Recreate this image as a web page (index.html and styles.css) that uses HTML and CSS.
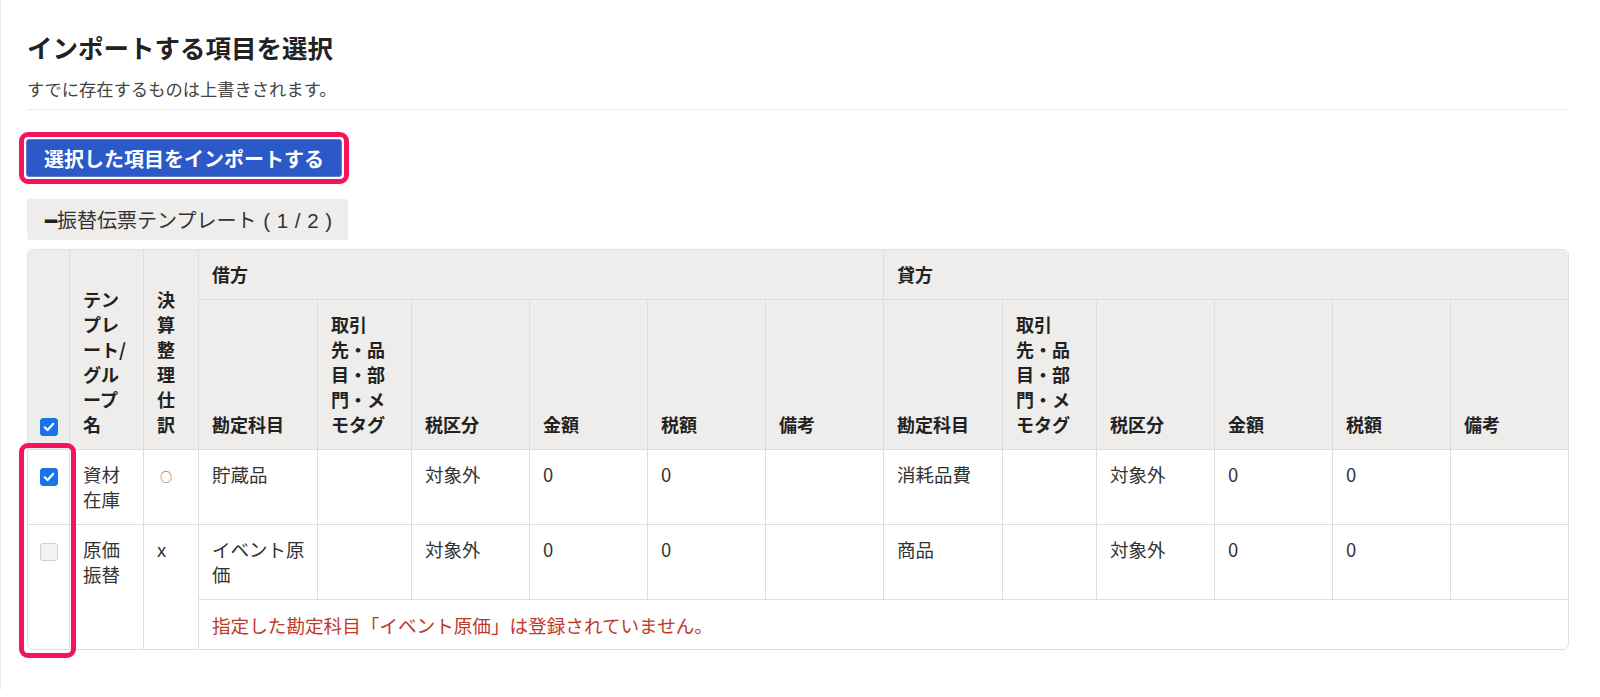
FILE: index.html
```html
<!DOCTYPE html>
<html lang="ja">
<head>
    <meta charset="UTF-8">
    <meta name="viewport" content="width=device-width, initial-scale=1.0">
    <title>インポートする項目を選択</title>
    <link rel="stylesheet" href="styles.css">
</head>
<body>
    <div class="page">
        <h1>インポートする項目を選択</h1>
        <p class="lead">すでに存在するものは上書きされます。</p>

        <div class="mark-box">
            <button type="button" class="import-button">選択した項目をインポートする</button>
        </div>

        <div class="tab"><span class="minus">━</span>振替伝票テンプレート<span class="count"> ( 1 / 2 )</span></div>

        <div class="table-wrap">
            <table class="import-table">
                <colgroup>
                    <col style="width:42px">
                    <col style="width:74px">
                    <col style="width:55px">
                    <col style="width:119px">
                    <col style="width:94px">
                    <col style="width:118px">
                    <col style="width:118px">
                    <col style="width:118px">
                    <col style="width:118px">
                    <col style="width:119px">
                    <col style="width:94px">
                    <col style="width:118px">
                    <col style="width:118px">
                    <col style="width:118px">
                    <col style="width:117px">
                </colgroup>
                <thead>
                    <tr>
                        <th rowspan="2" class="check-col"><input type="checkbox" class="check" checked></th>
                        <th rowspan="2">テンプレート/グループ名</th>
                        <th rowspan="2">決算整理仕訳</th>
                        <th colspan="6" class="group">借方</th>
                        <th colspan="6" class="group last">貸方</th>
                    </tr>
                    <tr>
                        <th>勘定科目</th>
                        <th>取引先・品目・部門・メモタグ</th>
                        <th>税区分</th>
                        <th>金額</th>
                        <th>税額</th>
                        <th>備考</th>
                        <th>勘定科目</th>
                        <th>取引先・品目・部門・メモタグ</th>
                        <th>税区分</th>
                        <th>金額</th>
                        <th>税額</th>
                        <th class="last">備考</th>
                    </tr>
                </thead>
                <tbody>
                    <tr>
                        <td class="check-col"><input type="checkbox" class="check" checked></td>
                        <td>資材在庫</td>
                        <td><span class="maru">○</span></td>
                        <td>貯蔵品</td>
                        <td></td>
                        <td>対象外</td>
                        <td>0</td>
                        <td>0</td>
                        <td></td>
                        <td>消耗品費</td>
                        <td></td>
                        <td>対象外</td>
                        <td>0</td>
                        <td>0</td>
                        <td class="last"></td>
                    </tr>
                    <tr>
                        <td rowspan="2" class="check-col end"><input type="checkbox" class="check"></td>
                        <td rowspan="2" class="end">原価振替</td>
                        <td rowspan="2" class="end">x</td>
                        <td>イベント原価</td>
                        <td></td>
                        <td>対象外</td>
                        <td>0</td>
                        <td>0</td>
                        <td></td>
                        <td>商品</td>
                        <td></td>
                        <td>対象外</td>
                        <td>0</td>
                        <td>0</td>
                        <td class="last"></td>
                    </tr>
                    <tr>
                        <td colspan="12" class="error end last">指定した勘定科目「イベント原価」は登録されていません。</td>
                    </tr>
                </tbody>
            </table>
            <!-- 注記用の枠 -->
            <div class="mark-column"></div>
        </div>
    </div>
</body>
</html>
```

FILE: styles.css
```css
body {
    margin: 0;
    background-color: #fff;
    font-family: "Noto Sans CJK JP", "Liberation Sans", sans-serif;
    color: #333;
}
.page {
    border-left: 1px solid #ececec;
    padding: 29px 31px 40px 26px;
    min-height: 620px;
}
h1 {
    margin: 0;
    font-size: 25.5px;
    line-height: 36px;
    font-weight: bold;
    color: #222;
}
.lead {
    margin: 11px 0 0;
    padding-bottom: 8px;
    font-size: 17.3px;
    line-height: 25px;
    color: #444;
    border-bottom: 1px solid #ececec;
}
.mark-box {
    display: inline-block;
    margin: 22px 0 0 -8px;
    padding: 2px;
    border: 5px solid #f7135a;
    border-radius: 9px;
}
.import-button {
    display: block;
    width: 316px;
    height: 38px;
    padding: 0;
    background-color: #2b5ac8;
    border: 1px solid #5a80d8;
    border-radius: 3px;
    color: #fff;
    font-family: inherit;
    font-size: 20px;
    font-weight: bold;
    cursor: pointer;
}
.tab {
    width: 321px;
    height: 41px;
    margin-top: 15px;
    padding-left: 18px;
    box-sizing: border-box;
    background-color: #efedec;
    border-radius: 3px;
    font-size: 20px;
    line-height: 41px;
    color: #333;
    white-space: nowrap;
}
.minus {
    font-family: "DejaVu Sans", sans-serif;
    font-weight: bold;
    color: #222;
}
.count {
    font-family: "Liberation Sans", sans-serif;
    font-size: 20.5px;
    word-spacing: 1px;
}
.table-wrap {
    position: relative;
    margin-top: 9px;
}
.import-table {
    width: 1542px;
    table-layout: fixed;
    border-collapse: separate;
    border-spacing: 0;
    border: 1px solid #dedede;
    border-radius: 6px;
    font-size: 18.5px;
    line-height: 25px;
}
.import-table th,
.import-table td {
    padding: 12px 12px 12px 13px;
    border-right: 1px solid #dedede;
    border-bottom: 1px solid #dedede;
    text-align: left;
    vertical-align: top;
}
.import-table th {
    background-color: #efedeb;
    color: #222;
    font-size: 18px;
    font-weight: bold;
    vertical-align: bottom;
}
.import-table th.group {
    vertical-align: top;
}
.import-table thead tr:first-child th:first-child {
    border-top-left-radius: 6px;
}
.import-table thead tr:first-child th.last {
    border-top-right-radius: 6px;
}
.import-table .last {
    border-right: none;
}
.import-table .end {
    border-bottom: none;
}
.import-table .check-col {
    padding-left: 0;
    padding-right: 0;
    text-align: center;
}
.maru {
    display: inline-block;
    padding-left: 3px;
    font-size: 12px;
    color: #555;
}
.error {
    color: #c0392b;
    font-size: 18.6px;
}
.check {
    appearance: none;
    -webkit-appearance: none;
    width: 18px;
    height: 18px;
    margin: 0;
    vertical-align: middle;
    border: 1px solid #cfcfcf;
    border-radius: 3px;
    background-color: #f3f3f3;
    cursor: pointer;
}
.check:checked {
    border-color: #1a73e8;
    background-color: #1a73e8;
    background-image: url("data:image/svg+xml,%3Csvg xmlns='http://www.w3.org/2000/svg' viewBox='0 0 18 18'%3E%3Cpath d='M4.2 9.3l3.2 3.1 6.4-7' fill='none' stroke='%23fff' stroke-width='2.4' stroke-linecap='round' stroke-linejoin='round'/%3E%3C/svg%3E");
    background-size: 100% 100%;
}
/* 注記の赤枠 */
.mark-column {
    position: absolute;
    left: -8px;
    top: 194px;
    width: 47px;
    height: 205px;
    border: 5px solid #f7135a;
    border-radius: 9px;
}
```
